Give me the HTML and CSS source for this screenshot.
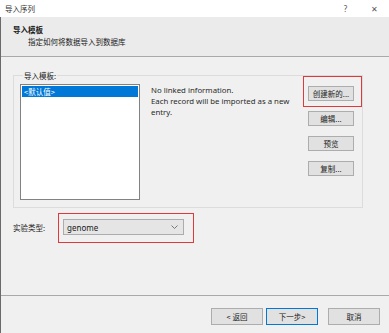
FILE: index.html
```html
<!DOCTYPE html>
<html>
<head>
<title>导入序列</title>
<link rel="stylesheet" href="styles.css">
</head>
<body>
  <div class="window">
    <div class="titlebar">
      <span class="title">导入序列</span>
      <span class="controls">
        <span class="ctl">?</span>
        <span class="ctl close">&#x2715;</span>
      </span>
    </div>

    <div class="main">
      <div class="header">
        <div class="header-title">导入模板</div>
        <div class="header-sub">指定如何将数据导入到数据库</div>
      </div>

      <div class="content">
        <fieldset class="group">
          <legend>导入模板:</legend>
          <div class="list">
            <div class="list-item selected">&lt;默认值&gt;</div>
          </div>
          <div class="info">
            No linked information.<br>
            Each record will be imported as a new<br>
            entry.
          </div>
          <div class="side-buttons">
            <button class="btn marked marked-create">创建新的...</button>
            <button class="btn">编辑...</button>
            <button class="btn">预览</button>
            <button class="btn">复制...</button>
          </div>
        </fieldset>

        <div class="type-row">
          <span class="type-label">实验类型:</span>
          <div class="combo marked marked-combo">
            <span>genome</span>
            <svg class="chevron" width="7" height="4" viewBox="0 0 7 4">
              <path d="M0.5 0.5 L3.5 3.5 L6.5 0.5" fill="none" stroke="#777" stroke-width="1"/>
            </svg>
          </div>
        </div>
      </div>

      <div class="footer">
        <button class="btn wide">&lt; 返回</button>
        <button class="btn wide default">下一步&gt;</button>
        <button class="btn wide cancel">取消</button>
      </div>
    </div>
  </div>
</body>
</html>
```

FILE: styles.css
```css
* {
  box-sizing: border-box;
}

body {
  margin: 0;
  width: 389px;
  height: 333px;
  background: #f0f0f0;
  font-family: "Noto Sans", "Noto Sans CJK SC", sans-serif;
  font-size: 8px;
  color: #1a1a1a;
  overflow: hidden;
}

.window {
  display: flex;
  flex-direction: column;
  height: 333px;
}

.titlebar {
  height: 17px;
  background: #fff;
  display: flex;
  align-items: center;
  justify-content: space-between;
  padding-left: 5px;
}

.title {
  font-family: "Noto Sans CJK SC", sans-serif;
  font-size: 7.5px;
  color: #333;
}

.controls {
  display: flex;
  align-items: center;
}

.ctl {
  width: 29px;
  text-align: center;
  font-size: 8px;
  color: #555;
}

.main {
  flex: 1;
  display: flex;
  flex-direction: column;
  border-left: 1px solid #6a6a6a;
}

.header {
  height: 40px;
  background: #ebebeb;
  border-bottom: 1px solid #a9a9a9;
  padding: 7px 0 0 12px;
  font-family: "Noto Sans CJK SC", sans-serif;
  font-size: 7.5px;
}

.header-title {
  font-weight: bold;
  line-height: 11px;
}

.header-sub {
  padding-left: 15px;
  line-height: 13px;
}

.content {
  flex: 1;
  padding: 13px 26px 0 12px;
}

.group {
  margin: 0;
  padding: 3px 8px 6px 6px;
  border: 1px solid #dcdcdc;
  display: flex;
  align-items: flex-start;
  height: 138px;
}

.group legend {
  font-family: "Noto Sans CJK SC", sans-serif;
  font-size: 7.5px;
  padding: 0 1px;
  margin-left: 3px;
}

.list {
  width: 120px;
  height: 116px;
  background: #fff;
  border: 1px solid #828282;
  padding: 1px;
}

.list-item {
  height: 11px;
  line-height: 11px;
  padding-left: 2px;
  font-family: "Noto Sans CJK SC", sans-serif;
  font-size: 7.5px;
}

.list-item.selected {
  background: #0078d7;
  color: #fff;
}

.info {
  flex: 1;
  padding: 1px 0 0 11px;
  line-height: 11px;
  font-size: 7.8px;
  color: #2a2a2a;
}

.side-buttons {
  display: flex;
  flex-direction: column;
  gap: 10px;
  margin-top: 2px;
}

.btn {
  position: relative;
  width: 46px;
  height: 15px;
  padding: 0;
  background: #e1e1e1;
  border: 1px solid #adadad;
  font-family: "Noto Sans CJK SC", sans-serif;
  font-size: 7.5px;
  color: #222;
}

.marked::after {
  content: '';
  position: absolute;
  border: 1.5px solid #e0393b;
}

.marked-create::after {
  left: -6px;
  right: -9px;
  top: -11px;
  bottom: -7px;
}

.type-row {
  display: flex;
  align-items: center;
  margin-top: 11px;
}

.type-label {
  width: 50px;
  font-family: "Noto Sans CJK SC", sans-serif;
  font-size: 7.5px;
}

.combo {
  position: relative;
  width: 121px;
  height: 16px;
  background: #e5e5e5;
  border: 1px solid #acacac;
  display: flex;
  align-items: center;
  justify-content: space-between;
  padding: 0 5px 0 3px;
  font-size: 8px;
}

.marked-combo::after {
  left: -6px;
  right: -11px;
  top: -7px;
  bottom: -9px;
}

.footer {
  height: 38px;
  border-top: 1px solid #a9a9a9;
  display: flex;
  align-items: flex-start;
  padding: 12px 0 0 210px;
}

.btn.wide {
  width: 52px;
  height: 17px;
}

.btn.default {
  margin-left: 3px;
  border: 1px solid #0078d7;
}

.btn.cancel {
  margin-left: 10px;
}
```
